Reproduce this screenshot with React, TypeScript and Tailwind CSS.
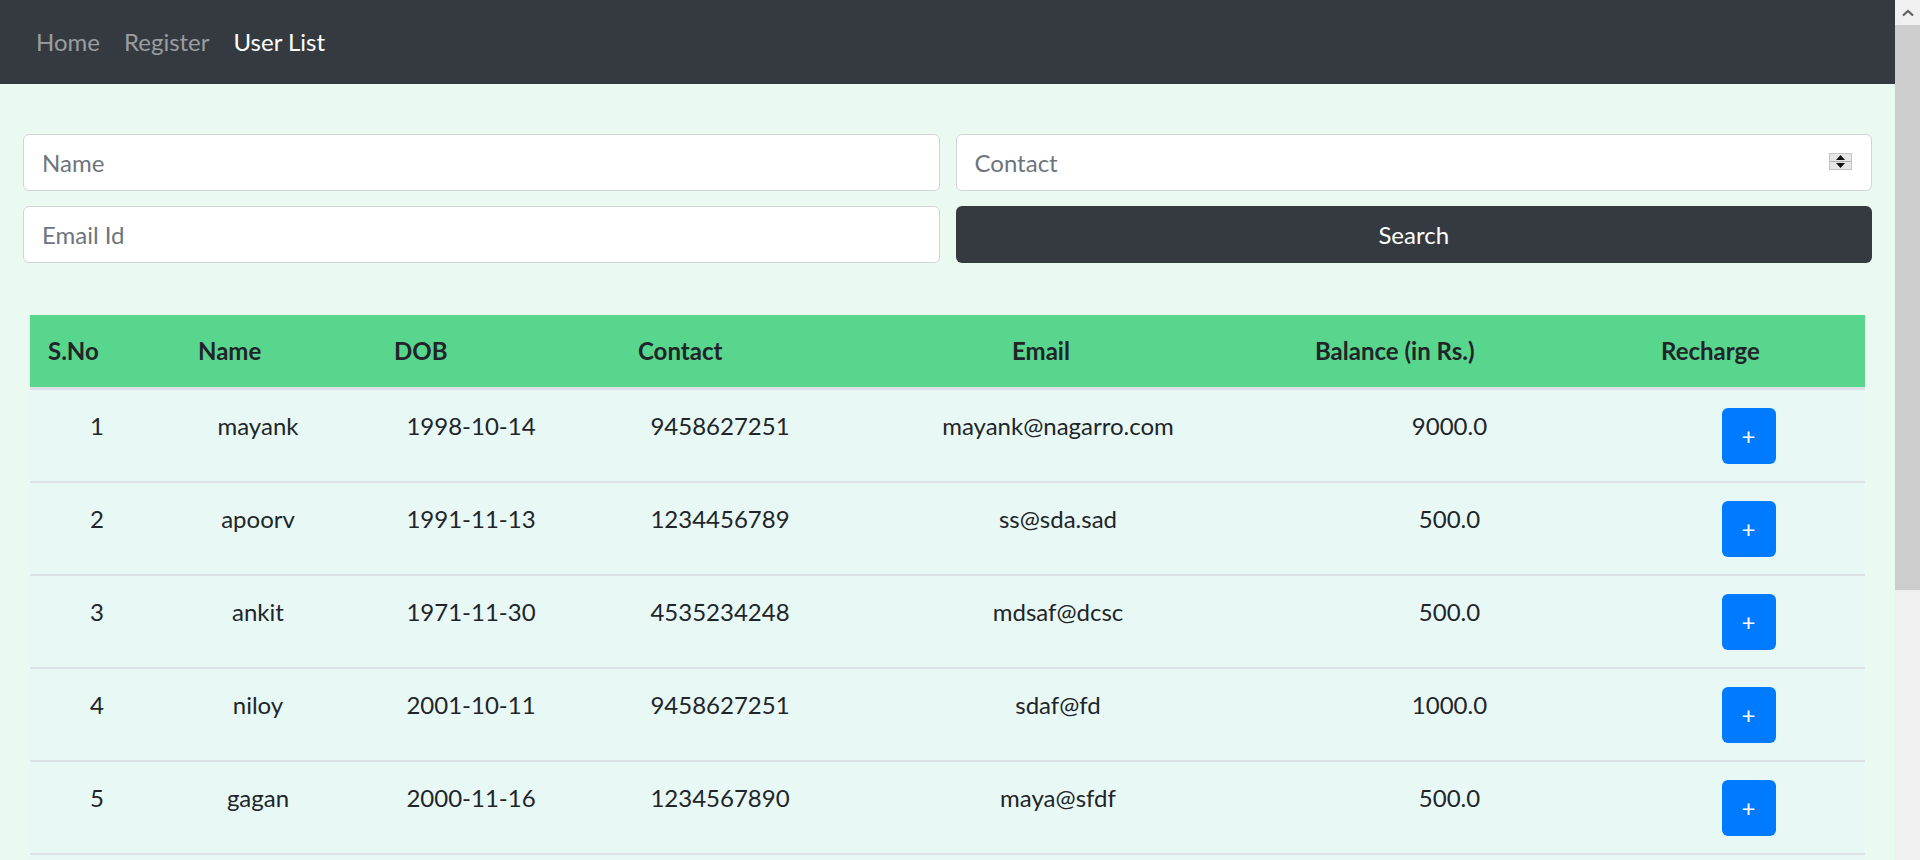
import React from "react";

type User = {
  id: number;
  name: string;
  dob: string;
  contact: string;
  email: string;
  balance: string;
};

const users: User[] = [
  { id: 1, name: "mayank", dob: "1998-10-14", contact: "9458627251", email: "mayank@nagarro.com", balance: "9000.0" },
  { id: 2, name: "apoorv", dob: "1991-11-13", contact: "1234456789", email: "ss@sda.sad", balance: "500.0" },
  { id: 3, name: "ankit", dob: "1971-11-30", contact: "4535234248", email: "mdsaf@dcsc", balance: "500.0" },
  { id: 4, name: "niloy", dob: "2001-10-11", contact: "9458627251", email: "sdaf@fd", balance: "1000.0" },
  { id: 5, name: "gagan", dob: "2000-11-16", contact: "1234567890", email: "maya@sfdf", balance: "500.0" },
];

const headers = ["S.No", "Name", "DOB", "Contact", "Email", "Balance (in Rs.)", "Recharge"];

const Navbar = () => (
  <nav className="flex h-[84px] shrink-0 items-center bg-[#343a40] px-[24px] text-[24px] leading-[36px]">
    <a className="px-[12px] text-[#9a9da0]">Home</a>
    <a className="px-[12px] text-[#9a9da0]">Register</a>
    <a className="px-[12px] text-white">User List</a>
  </nav>
);

const SpinBox = () => (
  <svg
    className="pointer-events-none absolute right-[20px] top-[19px]"
    width="23"
    height="17"
    viewBox="0 0 23 17"
  >
    <rect x="0.5" y="0.5" width="22" height="16" fill="#e6e6e6" stroke="#c4c4c4" />
    <line x1="1" y1="8.5" x2="22" y2="8.5" stroke="#b0b0b0" />
    <polygon points="11.5,2 16,7 7,7" fill="#111" />
    <polygon points="11.5,15 16,10 7,10" fill="#111" />
  </svg>
);

const SearchForm = () => (
  <div className="grid grid-cols-2 gap-x-[16px] gap-y-[15px] px-[23px] pt-[50px]">
    <input
      placeholder="Name"
      className="h-[57px] rounded-[6px] border-[1.5px] border-[#ced4da] bg-white px-[18px] text-[24px] text-[#495057] placeholder:text-[#6c757d] outline-none"
    />
    <div className="relative">
      <input
        placeholder="Contact"
        className="h-[57px] w-full rounded-[6px] border-[1.5px] border-[#ced4da] bg-white px-[18px] text-[24px] text-[#495057] placeholder:text-[#6c757d] outline-none"
      />
      <SpinBox />
    </div>
    <input
      placeholder="Email Id"
      className="h-[57px] rounded-[6px] border-[1.5px] border-[#ced4da] bg-white px-[18px] text-[24px] text-[#495057] placeholder:text-[#6c757d] outline-none"
    />
    <button className="h-[57px] rounded-[6px] bg-[#343a40] text-[24px] text-white">Search</button>
  </div>
);

const UserTable = () => (
  <div className="mx-[30px] mt-[52px] text-[24px] leading-[36px] text-[#212529]">
    <div className="grid h-[75px] grid-cols-[150px_196px_244px_374px_303px_346px_221px] border-b-[3px] border-[#dee2e6] bg-[#58d68d] font-bold">
      {headers.map((h) => (
        <div key={h} className="whitespace-nowrap py-[18px] pl-[18px]">
          {h}
        </div>
      ))}
    </div>
    {users.map((u) => (
      <div
        key={u.id}
        className="grid h-[93px] grid-cols-[134px_188px_238px_260px_416px_367px_231px] border-b-2 border-[#dee2e6] bg-[#e8f8f5] text-center"
      >
        <div className="py-[18px]">{u.id}</div>
        <div className="py-[18px]">{u.name}</div>
        <div className="py-[18px]">{u.dob}</div>
        <div className="py-[18px]">{u.contact}</div>
        <div className="py-[18px]">{u.email}</div>
        <div className="py-[18px]">{u.balance}</div>
        <div className="flex justify-center py-[18px]">
          <button className="h-[56px] w-[54px] rounded-[6px] bg-[#007bff] text-[24px] text-white">+</button>
        </div>
      </div>
    ))}
    <div className="h-[40px] bg-[#e8f8f5]" />
  </div>
);

const Scrollbar = () => (
  <div className="flex w-[25px] shrink-0 flex-col bg-[#f0f0f0]">
    <div className="flex h-[25px] items-center justify-center">
      <svg width="12" height="8" viewBox="0 0 12 8">
        <polyline points="1,6.5 6,2 11,6.5" fill="none" stroke="#606060" strokeWidth="2.2" />
      </svg>
    </div>
    <div className="h-[565px] bg-[#cdcdcd]" />
  </div>
);

export default function App() {
  return (
    <div className="flex h-[860px] w-full overflow-hidden bg-[#eafaf1] font-[Lato,sans-serif]">
      <div className="flex min-w-0 flex-1 flex-col">
        <Navbar />
        <SearchForm />
        <UserTable />
      </div>
      <Scrollbar />
    </div>
  );
}
